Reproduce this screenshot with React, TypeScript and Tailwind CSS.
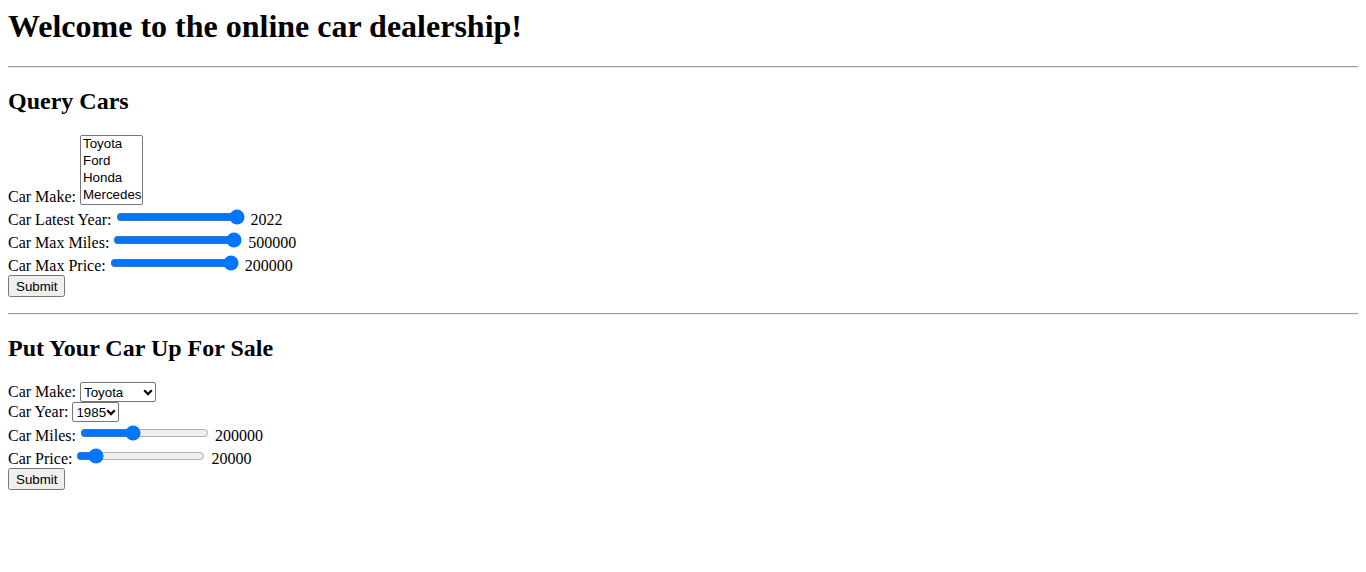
import { useState } from 'react'

const makes = ['Toyota', 'Ford', 'Honda', 'Mercedes']
const years = Array.from({ length: 2022 - 1985 + 1 }, (_, i) => 1985 + i)

// native browser look for the form controls (undo preflight)
const native = '[all:revert]'
const range = '[all:revert] !ml-0 !mt-[3px]'
const submit = '[all:revert] !h-[22px] !w-[57px]'

function Dropdown({ options }: { options: (string | number)[] }) {
    return (
        <span className="relative inline-block">
            <select className="appearance-none h-[20px] border border-[#767676] rounded-[2px] bg-white pl-[3px] pr-[12px] font-['Liberation_Sans',Arial,sans-serif] text-[13.333px] leading-[normal] text-black">
                {options.map(o => <option key={o}>{o}</option>)}
            </select>
            <svg className="pointer-events-none absolute right-[3px] top-[7px]" width="10" height="7" viewBox="0 0 10 7" fill="none">
                <path d="M1.2 1.3L5 5.1L8.8 1.3" stroke="#000" strokeWidth="2.2" />
            </svg>
        </span>
    )
}

export default function App() {
    const [year, setYear] = useState(2022)
    const [maxMiles, setMaxMiles] = useState(500000)
    const [maxPrice, setMaxPrice] = useState(200000)
    const [miles, setMiles] = useState(200000)
    const [price, setPrice] = useState(20000)

    return (
        <div className="p-2 font-['Liberation_Serif','Times_New_Roman',serif] text-[16px] leading-[normal] text-black bg-white min-h-[572px]">
            <h1 className="text-[32px] font-bold mb-[21.44px]">Welcome to the online car dealership!</h1>
            <hr className="my-2 border-t border-b border-t-[#9a9a9a] border-b-[#eeeeee]" />

            <h2 className="text-[24px] font-bold my-[19.92px]">Query Cars</h2>
            <form onSubmit={e => e.preventDefault()}>
                <label>Car Make: </label>
                <select multiple size={4} className={`${native} !w-[63px]`}>
                    {makes.map(m => <option key={m} className={native}>{m}</option>)}
                </select>
                <br />
                <label>Car Latest Year: </label>
                <input type="range" min={1985} max={2022} value={year} onChange={e => setYear(+e.target.value)} className={range} /> {year}
                <br />
                <label>Car Max Miles: </label>
                <input type="range" min={0} max={500000} value={maxMiles} onChange={e => setMaxMiles(+e.target.value)} className={range} /> {maxMiles}
                <br />
                <label>Car Max Price: </label>
                <input type="range" min={0} max={200000} value={maxPrice} onChange={e => setMaxPrice(+e.target.value)} className={range} /> {maxPrice}
                <br />
                <button type="submit" className={submit}>Submit</button>
            </form>

            <hr className="mt-4 mb-2 border-t border-b border-t-[#9a9a9a] border-b-[#eeeeee]" />

            {/* SELL */}
            <h2 className="text-[24px] font-bold my-[19.92px]">Put Your Car Up For Sale</h2>
            <form onSubmit={e => e.preventDefault()}>
                <label>Car Make: </label>
                <Dropdown options={makes} />
                <br />
                <label>Car Year: </label>
                <Dropdown options={years} />
                <br />
                <label>Car Miles: </label>
                <input type="range" min={0} max={500000} value={miles} onChange={e => setMiles(+e.target.value)} className={range} /> {miles}
                <br />
                <label>Car Price: </label>
                <input type="range" min={0} max={200000} value={price} onChange={e => setPrice(+e.target.value)} className={range} /> {price}
                <br />
                <button type="submit" className={submit}>Submit</button>
            </form>
        </div>
    )
}
